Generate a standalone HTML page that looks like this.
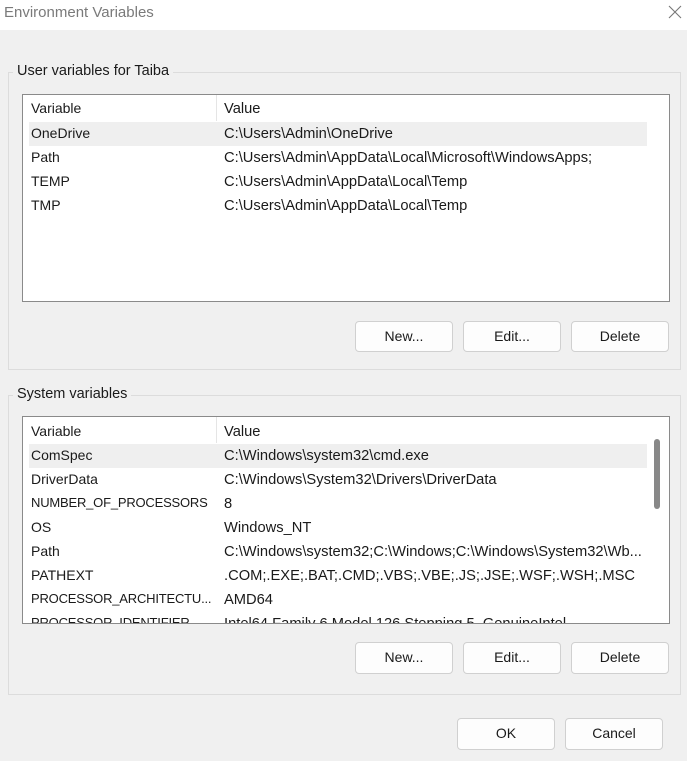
<!DOCTYPE html>
<html><head><style>
*{box-sizing:border-box;margin:0;padding:0}
body{width:687px;height:761px;background:#f0f0f0;font-family:"Liberation Sans",sans-serif;font-size:14px;color:#1a1a1a;position:relative;overflow:hidden}
.a{position:absolute}
.title{left:0;top:0;width:687px;height:30px;background:#fff;}
.grp{border:1px solid #dcdcdc;}
.lbl{background:#f0f0f0;padding:0 4px;}
.list{background:#fff;border:1px solid #8a8a8a;overflow:hidden}
.row{position:absolute;left:6px;width:618px;height:24px;white-space:nowrap}
.row span{position:absolute;left:2px;top:-1px;height:24px;line-height:24px}
.row span+span{left:195px;top:0;font-size:14.7px}
.row .c{font-size:13px;letter-spacing:-0.2px}
.sel{background:#efefef}
.btn{background:#fdfdfd;border:1px solid #d0d0d0;border-radius:4px;text-align:center;line-height:29px;font-size:14px}
</style></head><body>
<div class="a title"></div>
<div class="a" style="left:4px;top:4px;color:#7a7a7a;font-size:15px">Environment Variables</div>
<svg class="a" style="left:668px;top:5px" width="14" height="14"><path d="M1 1L13 13M13 1L1 13" stroke="#777" stroke-width="1.1"/></svg>

<div class="a grp" style="left:8px;top:72px;width:673px;height:298px"></div>
<div class="a lbl" style="left:13px;top:63px;font-size:14.5px">User variables for Taiba</div>
<div class="a list" style="left:22px;top:94px;width:648px;height:208px">
<div class="a" style="left:193px;top:0;width:1px;height:26px;background:#e5e5e5"></div>
<div class="row" style="top:2px"><span>Variable</span><span>Value</span></div>
<div class="row sel" style="top:27px"><span>OneDrive</span><span>C:\Users\Admin\OneDrive</span></div>
<div class="row" style="top:51px"><span>Path</span><span>C:\Users\Admin\AppData\Local\Microsoft\WindowsApps;</span></div>
<div class="row" style="top:75px"><span>TEMP</span><span>C:\Users\Admin\AppData\Local\Temp</span></div>
<div class="row" style="top:99px"><span>TMP</span><span>C:\Users\Admin\AppData\Local\Temp</span></div>
</div>
<div class="a btn" style="left:355px;top:321px;width:98px;height:31px">New...</div>
<div class="a btn" style="left:463px;top:321px;width:98px;height:31px">Edit...</div>
<div class="a btn" style="left:571px;top:321px;width:98px;height:31px">Delete</div>

<div class="a grp" style="left:8px;top:395px;width:673px;height:300px"></div>
<div class="a lbl" style="left:13px;top:386px;font-size:14.5px">System variables</div>
<div class="a list" style="left:22px;top:416px;width:648px;height:208px">
<div class="a" style="left:193px;top:0;width:1px;height:26px;background:#e5e5e5"></div>
<div class="row" style="top:3px"><span>Variable</span><span>Value</span></div>
<div class="row sel" style="top:27px"><span>ComSpec</span><span>C:\Windows\system32\cmd.exe</span></div>
<div class="row" style="top:51px"><span>DriverData</span><span>C:\Windows\System32\Drivers\DriverData</span></div>
<div class="row" style="top:75px"><span class="c">NUMBER_OF_PROCESSORS</span><span>8</span></div>
<div class="row" style="top:99px"><span>OS</span><span>Windows_NT</span></div>
<div class="row" style="top:123px"><span>Path</span><span>C:\Windows\system32;C:\Windows;C:\Windows\System32\Wb...</span></div>
<div class="row" style="top:147px"><span>PATHEXT</span><span>.COM;.EXE;.BAT;.CMD;.VBS;.VBE;.JS;.JSE;.WSF;.WSH;.MSC</span></div>
<div class="row" style="top:171px"><span class="c">PROCESSOR_ARCHITECTU...</span><span>AMD64</span></div>
<div class="row" style="top:195px"><span class="c">PROCESSOR_IDENTIFIER</span><span>Intel64 Family 6 Model 126 Stepping 5, GenuineIntel</span></div>
<div class="a" style="left:631px;top:22px;width:6px;height:70px;background:#888;border-radius:3px"></div>
</div>
<div class="a btn" style="left:355px;top:642px;width:98px;height:32px">New...</div>
<div class="a btn" style="left:463px;top:642px;width:98px;height:32px">Edit...</div>
<div class="a btn" style="left:571px;top:642px;width:98px;height:32px">Delete</div>

<div class="a btn" style="left:457px;top:718px;width:98px;height:32px">OK</div>
<div class="a btn" style="left:565px;top:718px;width:98px;height:32px">Cancel</div>
</body></html>
